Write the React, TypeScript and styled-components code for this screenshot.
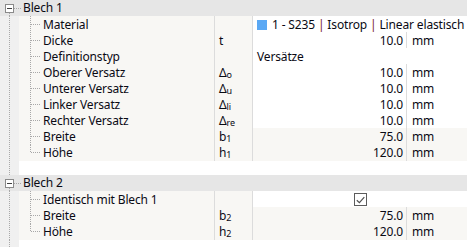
import React from "react";
import styled, { createGlobalStyle } from "styled-components";

const Global = createGlobalStyle`
  html, body { margin: 0; padding: 0; background: #ffffff; }
  body { font-family: "Noto Sans", "Liberation Sans", sans-serif; font-size: 12px; letter-spacing: -0.15px; color: #0a0a14; }
`;

const Page = styled.div`
  width: 467px;
  height: 247px;
  display: flex;
  flex-direction: column;
  overflow: hidden;
  background: #ffffff;
`;

const Gutter = styled.div`
  position: relative;
  width: 19px;
  flex: 0 0 19px;
  align-self: stretch;
  background: #f0f0f0;
  &::before {
    content: "";
    position: absolute;
    left: 9px;
    top: 0;
    bottom: 0;
    border-left: 1px dotted #a8a8a8;
  }
`;

const HeaderRow = styled.div`
  display: flex;
  align-items: center;
  height: 16px;
  background: #e6e6e6;
`;

const HeaderGutter = styled.div`
  position: relative;
  width: 19px;
  flex: 0 0 19px;
  height: 16px;
  &::before {
    content: "";
    position: absolute;
    left: 9px;
    top: 12px;
    bottom: 0;
    border-left: 1px dotted #a8a8a8;
  }
  &::after {
    content: "";
    position: absolute;
    left: 14px;
    width: 7px;
    top: 8px;
    border-top: 1px dotted #a8a8a8;
  }
`;

const ToggleBox = styled.span`
  position: absolute;
  left: 5px;
  top: 4px;
  width: 7px;
  height: 7px;
  border: 1px solid #8a8a8a;
  background: #ffffff;
  &::after {
    content: "";
    position: absolute;
    left: 1px;
    right: 1px;
    top: 3px;
    border-top: 1px solid #404040;
  }
`;

const HeaderTitle = styled.span`
  padding-left: 4px;
  line-height: 16px;
`;

const Row = styled.div`
  display: grid;
  grid-template-columns: 19px 196px 38px 154px 1fr;
  height: 16px;
`;

const NameCell = styled.div`
  display: flex;
  align-items: center;
  background: #f8f7f4;
  border-right: 1px solid #dcdcdc;
  white-space: nowrap;
`;

const Branch = styled.span<{ $last?: boolean }>`
  position: relative;
  width: 24px;
  flex: 0 0 24px;
  align-self: stretch;
  &::before {
    content: "";
    position: absolute;
    left: 11px;
    top: 0;
    height: ${(p) => (p.$last ? "8px" : "100%")};
    border-left: 1px dotted #a8a8a8;
  }
  &::after {
    content: "";
    position: absolute;
    left: 12px;
    width: 9px;
    top: 8px;
    border-top: 1px dotted #a8a8a8;
  }
`;

const SymbolCell = styled.div`
  display: flex;
  align-items: center;
  padding-left: 4px;
  background: #f8f7f4;
  border-right: 1px solid #dcdcdc;
  white-space: nowrap;
`;

const Sub = styled.span`
  font-size: 9px;
  position: relative;
  top: 2px;
`;

const ValueCell = styled.div<{ $editable?: boolean }>`
  display: flex;
  align-items: center;
  justify-content: flex-end;
  padding: 0 3px 0 4px;
  background: ${(p) => (p.$editable ? "#ffffff" : "#f8f7f4")};
  border-right: 1px solid #dcdcdc;
  white-space: nowrap;
`;

const UnitCell = styled.div<{ $editable?: boolean }>`
  display: flex;
  align-items: center;
  padding-left: 5px;
  background: ${(p) => (p.$editable ? "#ffffff" : "#f8f7f4")};
`;

const WideCell = styled.div<{ $center?: boolean }>`
  grid-column: 4 / 6;
  display: flex;
  align-items: center;
  justify-content: ${(p) => (p.$center ? "center" : "flex-start")};
  padding-left: ${(p) => (p.$center ? "0" : "4px")};
  background: #ffffff;
  white-space: pre;
`;

const Swatch = styled.span`
  width: 10px;
  height: 10px;
  background: #5aa8f4;
  margin-right: 5px;
  flex: 0 0 10px;
`;

const Sep = styled.span`
  color: #7a1e1e;
`;

const CheckBox = styled.span`
  width: 11px;
  height: 11px;
  border: 1px solid #5c5c5c;
  background: #ffffff;
  display: flex;
  align-items: center;
  justify-content: center;
  margin-left: 1px;
`;

const Gap = styled.div<{ $h: number }>`
  display: flex;
  height: ${(p) => p.$h}px;
  flex: 0 0 ${(p) => p.$h}px;
`;

const Fill = styled.div`
  flex: 1;
`;

type Item = {
  name: string;
  sym?: React.ReactNode;
  value?: string;
  unit?: string;
  editable?: boolean;
  kind?: "material" | "text" | "check";
  text?: string;
};

const delta = (s: string) => (
  <>
    Δ<Sub>{s}</Sub>
  </>
);
const sub = (b: string, s: string) => (
  <>
    {b}
    <Sub>{s}</Sub>
  </>
);

const blech1: Item[] = [
  { name: "Material", kind: "material" },
  { name: "Dicke", sym: "t", value: "10.0", unit: "mm", editable: true },
  { name: "Definitionstyp", kind: "text", text: "Versätze" },
  { name: "Oberer Versatz", sym: delta("o"), value: "10.0", unit: "mm", editable: true },
  { name: "Unterer Versatz", sym: delta("u"), value: "10.0", unit: "mm", editable: true },
  { name: "Linker Versatz", sym: delta("li"), value: "10.0", unit: "mm", editable: true },
  { name: "Rechter Versatz", sym: delta("re"), value: "10.0", unit: "mm", editable: true },
  { name: "Breite", sym: sub("b", "1"), value: "75.0", unit: "mm" },
  { name: "Höhe", sym: sub("h", "1"), value: "120.0", unit: "mm" },
];

const blech2: Item[] = [
  { name: "Identisch mit Blech 1", kind: "check" },
  { name: "Breite", sym: sub("b", "2"), value: "75.0", unit: "mm" },
  { name: "Höhe", sym: sub("h", "2"), value: "120.0", unit: "mm" },
];

const PropRow: React.FC<{ item: Item; last: boolean }> = ({ item, last }) => (
  <Row>
    <Gutter />
    <NameCell>
      <Branch $last={last} />
      {item.name}
    </NameCell>
    <SymbolCell>{item.sym}</SymbolCell>
    {item.kind === "material" ? (
      <WideCell>
        <Swatch />
        {"1 - S235 "}
        <Sep>|</Sep>
        {" Isotrop "}
        <Sep>|</Sep>
        {" Linear elastisch"}
      </WideCell>
    ) : item.kind === "text" ? (
      <WideCell>{item.text}</WideCell>
    ) : item.kind === "check" ? (
      <WideCell $center>
        <CheckBox>
          <svg width="9" height="8" viewBox="0 0 9 8">
            <path d="M0.8 4.2 L3.4 6.6 L8.3 1.2" fill="none" stroke="#505050" strokeWidth="1.2" />
          </svg>
        </CheckBox>
      </WideCell>
    ) : (
      <>
        <ValueCell $editable={item.editable}>{item.value}</ValueCell>
        <UnitCell $editable={item.editable}>{item.unit}</UnitCell>
      </>
    )}
  </Row>
);

const Section: React.FC<{ title: string; items: Item[] }> = ({ title, items }) => (
  <>
    <HeaderRow>
      <HeaderGutter>
        <ToggleBox />
      </HeaderGutter>
      <HeaderTitle>{title}</HeaderTitle>
    </HeaderRow>
    {items.map((it, i) => (
      <PropRow key={i} item={it} last={i === items.length - 1} />
    ))}
  </>
);

export default function App() {
  return (
    <Page>
      <Global />
      <Section title="Blech 1" items={blech1} />
      <Gap $h={15}>
        <Gutter />
        <Fill />
      </Gap>
      <Section title="Blech 2" items={blech2} />
      <Gap $h={10}>
        <Gutter />
        <Fill />
      </Gap>
    </Page>
  );
}
